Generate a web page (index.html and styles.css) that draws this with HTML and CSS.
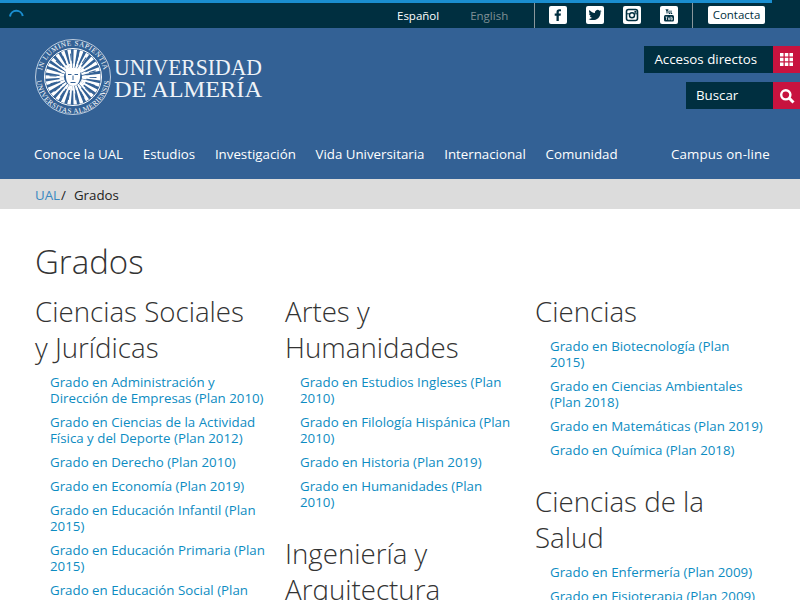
FILE: index.html
```html
<!DOCTYPE html>
<html lang="es">
<head>
<meta charset="utf-8">
<title>Grados - Universidad de Almería</title>
<link rel="stylesheet" href="styles.css">
</head>
<body>
<div class="progress"></div>
<div class="topbar">
  <svg class="spinner" width="16" height="16" viewBox="0 0 16 16"><path d="M1 8.500A6.500 6.500 0 0 1 13.800 8" fill="none" stroke="#1a8ed0" stroke-width="2"/></svg>
  <div class="top-right">
    <div class="langs"><a class="lang on">Español</a><a class="lang off">English</a></div>
    <div class="socials">
      <span class="soc"><svg width="18" height="18" viewBox="0 0 18 18"><path d="M9.800 15V9.700h1.800l.3-2.100H9.800V6.300c0-.6.2-1 1-1H12V3.400c-.2 0-.9-.1-1.700-.1-1.700 0-2.800 1-2.800 2.800v1.500H5.700v2.100h1.800V15z" fill="#002f40"/></svg></span>
      <span class="soc"><svg width="18" height="18" viewBox="0 0 18 18"><path d="M15.500 5c-.5.200-1 .4-1.500.4.500-.3 1-.8 1.200-1.400-.5.300-1.100.5-1.700.7a2.700 2.700 0 0 0-4.600 2.400C6.600 6.500 4.700 5.500 3.400 3.900c-.7 1.200-.4 2.800.8 3.600-.4 0-.8-.1-1.200-.3 0 1.300.9 2.400 2.100 2.700-.4.100-.8.100-1.200 0 .3 1.100 1.300 1.800 2.500 1.900-1.100.8-2.500 1.200-3.900 1.100 4.900 3 12.100.4 12.100-7 .6-.4 1-.9 1.400-1.500z" fill="#002f40"/></svg></span>
      <span class="soc"><svg width="18" height="18" viewBox="0 0 18 18"><rect x="3.500" y="3.500" width="11" height="11" rx="2" fill="none" stroke="#002f40" stroke-width="1.600"/><circle cx="9" cy="9.300" r="2.500" fill="none" stroke="#002f40" stroke-width="1.400"/><rect x="11.400" y="4.800" width="2" height="2" fill="#002f40"/><path d="M3.500 7.800h3M11.500 7.800h3" stroke="#002f40"/></svg></span>
      <span class="soc"><svg width="18" height="18" viewBox="0 0 18 18"><rect x="4" y="9" width="10" height="6.500" rx="1.500" fill="#002f40"/><path d="M6 3l1 2.500V7.500M8 3L7 5.500M9 4.500v3h1.200M11 4.500v3h1.200" fill="none" stroke="#002f40" stroke-width="1"/><path d="M5.500 11h2M6.500 11v3M8.500 11.500v2.200h1.200v-2.200M11 10.500v3.300h1.300v-2h-1.300" fill="none" stroke="#fff" stroke-width=".7"/></svg></span>
    </div>
    <div class="contact"><a class="contacta">Contacta</a></div>
  </div>
</div>
<header class="header">
  <div class="header-main">
    <svg class="logo" width="240" height="84" viewBox="0 0 240 84">
      <defs>
        <path id="arcTop" d="M10.500 42a31.500 31.500 0 1 1 63 0"/>
        <path id="arcBottom" d="M5.500 42a36.500 36.500 0 0 0 73 0"/>
      </defs>
      <circle cx="42" cy="42" r="37.500" fill="none" stroke="#dfe7f0" stroke-width=".8"/>
      <circle cx="42" cy="42" r="28.500" fill="none" stroke="#fff" stroke-width="1"/>
      <text class="seal-text"><textPath href="#arcTop" startOffset="50%" text-anchor="middle">IN LUMINE SAPIENTIA</textPath></text>
      <text class="seal-text"><textPath href="#arcBottom" startOffset="50%" text-anchor="middle">UNIVERSITAS ALMERIENSIS</textPath></text>
      <circle cx="42" cy="42" r="17" fill="none" stroke="#fff" stroke-width="21" stroke-dasharray="2.200 1.800"/>
      <circle cx="42" cy="42" r="20" fill="none" stroke="#336195" stroke-width="7" stroke-dasharray="1 6"/>
      <circle cx="42" cy="42" r="11" fill="none" stroke="#fff" stroke-width="5" stroke-dasharray="2 1.200"/>
      <circle cx="42" cy="42" r="9" fill="#336195"/>
      <path d="M34.500 34c3-1.500 12-1.500 15 0l-.5 9c-.5 5-3.500 8-7 8s-6.500-3-7-8z" fill="#fff"/>
      <path d="M37 39.500h3.500M43.500 39.500h3.500M42 40.500v4.500M39.500 47.500h5" stroke="#336195" stroke-width="1" fill="none"/>
      <text class="word" x="83" y="39.500" textLength="148" lengthAdjust="spacingAndGlyphs">UNIVERSIDAD</text>
      <text class="word" x="83" y="62" textLength="148" lengthAdjust="spacingAndGlyphs">DE ALMERÍA</text>
    </svg>
    <div class="quick">
      <a class="quick-row"><span class="quick-label">Accesos directos</span><span class="quick-icon"><svg width="15" height="15" viewBox="0 0 15 15"><path d="M1 1h3.500v3.500H1zM5.800 1h3.500v3.500H5.800zM10.500 1H14v3.500h-3.500zM1 5.800h3.500v3.500H1zM5.800 5.800h3.500v3.500H5.800zM10.500 5.800H14v3.500h-3.500zM1 10.500h3.500V14H1zM5.800 10.500h3.500V14H5.800zM10.500 10.500H14V14h-3.500z" fill="#fff"/></svg></span></a>
      <a class="quick-row"><span class="quick-label">Buscar</span><span class="quick-icon"><svg width="16" height="16" viewBox="0 0 16 16"><circle cx="6.800" cy="6.800" r="4.600" fill="none" stroke="#fff" stroke-width="2.400"/><path d="M10.300 10.300L14.500 14.500" stroke="#fff" stroke-width="3"/></svg></span></a>
    </div>
  </div>
  <nav class="nav">
    <a>Conoce la UAL</a><a>Estudios</a><a>Investigación</a><a>Vida Universitaria</a><a>Internacional</a><a>Comunidad</a><a class="campus">Campus on-line</a>
  </nav>
</header>
<div class="crumbs"><a class="crumb-link">UAL</a><span class="crumb-sep">/</span><span>Grados</span></div>
<main class="content">
  <h1 class="title">Grados</h1>
  <div class="cols">
    <div class="col">
      <h2 class="area">Ciencias Sociales y Jurídicas</h2>
      <ul class="list">
        <li><a>Grado en Administración y Dirección de Empresas (Plan 2010)</a></li>
        <li><a>Grado en Ciencias de la Actividad Física y del Deporte (Plan 2012)</a></li>
        <li><a>Grado en Derecho (Plan 2010)</a></li>
        <li><a>Grado en Economía (Plan 2019)</a></li>
        <li><a>Grado en Educación Infantil (Plan 2015)</a></li>
        <li><a>Grado en Educación Primaria (Plan 2015)</a></li>
        <li><a>Grado en Educación Social (Plan 2010)</a></li>
      </ul>
    </div>
    <div class="col">
      <h2 class="area">Artes y Humanidades</h2>
      <ul class="list">
        <li><a>Grado en Estudios Ingleses (Plan 2010)</a></li>
        <li><a>Grado en Filología Hispánica (Plan 2010)</a></li>
        <li><a>Grado en Historia (Plan 2019)</a></li>
        <li><a>Grado en Humanidades (Plan 2010)</a></li>
      </ul>
      <h2 class="area">Ingeniería y Arquitectura</h2>
    </div>
    <div class="col">
      <h2 class="area">Ciencias</h2>
      <ul class="list">
        <li><a>Grado en Biotecnología (Plan 2015)</a></li>
        <li><a>Grado en Ciencias Ambientales (Plan 2018)</a></li>
        <li><a>Grado en Matemáticas (Plan 2019)</a></li>
        <li><a>Grado en Química (Plan 2018)</a></li>
      </ul>
      <h2 class="area">Ciencias de la Salud</h2>
      <ul class="list">
        <li><a>Grado en Enfermería (Plan 2009)</a></li>
        <li><a>Grado en Fisioterapia (Plan 2009)</a></li>
      </ul>
    </div>
  </div>
</main>
</body>
</html>
```
FILE: styles.css
```css
* { box-sizing: border-box; }
html, body { margin: 0; padding: 0; }
html { height: 600px; overflow: hidden; }
body { position: relative; font-family: "Open Sans", "Noto Sans", sans-serif; font-size: 13.3px; color: #222; background: #fff; }
.progress { position: absolute; top: 0; left: 0; width: 772px; height: 3px; background: #1a8ed0; }
.topbar { height: 28px; background: #002f40; display: flex; justify-content: space-between; padding-left: 9px; }
.spinner { margin-top: 8px; }
.top-right { display: flex; align-items: stretch; padding-top: 2px; }
.langs { display: flex; align-items: center; gap: 31px; width: 137px; font-size: 11.5px; }
.lang.on { color: #fff; }
.lang.off { color: #7f8f96; }
.socials { display: flex; align-items: center; gap: 19px; width: 159px; padding-left: 14px; border-left: 1px solid #8a979c; border-right: 1px solid #8a979c; }
.soc { width: 18px; height: 18px; background: #fff; border-radius: 2px; display: block; }
.soc svg { display: block; }
.contact { display: flex; align-items: center; padding: 0 35px 0 15px; }
.contacta { display: block; width: 57px; height: 18px; line-height: 18px; background: #fff; color: #002f40; border-radius: 2px; font-size: 11.5px; text-align: center; }
.header { height: 151px; background: #336195; color: #fff; display: flex; flex-direction: column; }
.header-main { flex: 1; display: flex; justify-content: space-between; }
.logo { margin: 7px 0 0 31px; display: block; }
.seal-text { font-family: "Liberation Serif", serif; font-size: 7.2px; fill: #fff; letter-spacing: .5px; }
.word { font-family: "Liberation Serif", serif; font-size: 23.5px; fill: #eef3f8; }
.quick { display: flex; flex-direction: column; align-items: flex-end; gap: 9px; padding-top: 18px; }
.quick-row { display: flex; height: 27px; background: #002f40; color: #fff; }
.quick-label { padding: 0 16px 0 10px; line-height: 26px; font-size: 13.3px; }
.quick-row + .quick-row .quick-label { width: 87px; }
.quick-icon { width: 27px; background: #c8133f; display: flex; align-items: center; justify-content: center; }
.nav { height: 50px; display: flex; gap: 19.7px; align-items: center; padding: 0 30px 0 34px; font-size: 13.3px; }
.campus { margin-left: auto; letter-spacing: .15px; }
.crumbs { height: 30px; background: #dcdcdc; padding: 2px 0 0 35px; display: flex; align-items: center; font-size: 13.3px; color: #222; }
.crumb-link { color: #3a88c0; }
.crumb-sep { margin: 0 8px 0 1px; }
.content { padding: 29px 20px 0 20px; }
.title { margin: 0 0 0 15px; font-size: 33px; font-weight: 300; line-height: 48px; color: #333; }
.cols { display: flex; margin-top: 7px; }
.col { width: 250px; padding: 0 5px 0 15px; }
.area { margin: 0; padding-right: 10px; font-size: 27.7px; font-weight: 300; line-height: 36px; color: #333; }
.list { list-style: none; margin: 0; padding: 1px 0 17px 15px; }
.list li { margin: 8px 0; line-height: 16px; font-size: 13.3px; color: #0d8cc2; }
```
